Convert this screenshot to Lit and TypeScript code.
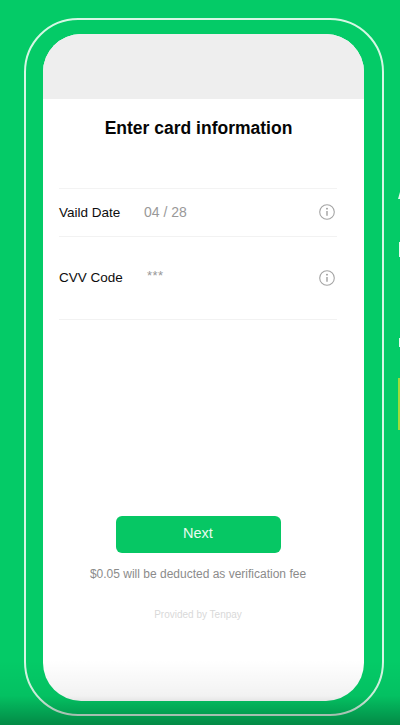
import { LitElement, html, css, svg } from "lit";
import { customElement } from "lit/decorators.js";

const info = svg`<svg class="info" viewBox="0 0 16 16" width="16" height="16" fill="none">
  <circle cx="8" cy="8" r="7.3" stroke="#a4a4a4" stroke-width="1.1"/>
  <circle cx="8" cy="4.7" r="0.85" fill="#909090"/>
  <path d="M8 6.9V11.8" stroke="#909090" stroke-width="1.2"/>
</svg>`;

@customElement("app-root")
export class AppRoot extends LitElement {
  static styles = css`
    :host {
      display: block;
      position: relative;
      width: 400px;
      height: 725px;
      overflow: hidden;
      background: #04cb67;
      font-family: "Liberation Sans", Arial, sans-serif;
    }
    .frame {
      box-sizing: border-box;
      position: absolute;
      left: 24px;
      top: 18px;
      width: 360px;
      height: 698px;
      padding: 14px 18px 13px 17px;
      border: 2px solid #d6f7e4;
      border-radius: 54px;
    }
    .phone {
      box-sizing: border-box;
      height: 100%;
      display: flex;
      flex-direction: column;
      overflow: hidden;
      border-radius: 38px;
      background: #fff;
    }
    .status { height: 65px; flex: none; background: #eeeeee; }
    h1 {
      margin: 19px 10px 0 0;
      font-size: 17.5px;
      line-height: 21px;
      font-weight: 700;
      text-align: center;
      color: #050505;
    }
    .form {
      margin: 49px 27px 0 16px;
      border-top: 1px solid #f3f3f3;
    }
    .row {
      box-sizing: border-box;
      display: flex;
      align-items: center;
      border-bottom: 1px solid #f2f2f2;
      font-size: 13.5px;
      color: #0d0d0d;
    }
    .row.date { height: 48px; padding-bottom: 1px; }
    .row.cvv { height: 83px; align-items: flex-start; }
    .row.cvv > * { margin-top: 33px; }
    .label { width: 85px; }
    .value { flex: 1; color: #999999; font-size: 14px; }
    .stars { font-size: 13px; padding-left: 3px; margin-top: 31px !important; letter-spacing: 0.5px; }
    .info { flex: none; margin-right: 2px; }
    .row.cvv .info { margin-top: 33px; }
    .actions {
      margin-top: auto;
      margin-right: 11px;
      padding-bottom: 80px;
      display: flex;
      flex-direction: column;
      align-items: center;
    }
    button {
      width: 165px;
      height: 37px;
      border: 0;
      border-radius: 6px;
      background: #06c764;
      color: #e9fbf1;
      font: 14.5px "Liberation Sans", Arial, sans-serif;
      padding: 0 0 3px;
    }
    .fee { margin-top: 14px; font-size: 12px; line-height: 14px; color: #8b8b8b; }
    .by { margin-top: 28px; font-size: 10px; line-height: 12px; color: #d9d9d9; }
    .shade {
      position: absolute;
      left: 0;
      right: 0;
      bottom: 0;
      height: 65px;
      pointer-events: none;
      background: linear-gradient(rgba(0,0,0,0), rgba(0,0,0,0.05) 55%, rgba(0,0,0,0.32));
    }
    .edge { position: absolute; background: #e6fbef; }
    .a { left: 398px; top: 192px; width: 2px; height: 7px; clip-path: polygon(100% 0, 100% 100%, 0 100%); }
    .c { left: 399px; top: 242px; width: 1px; height: 15px; }
    .d { left: 399px; top: 338px; width: 1px; height: 9px; }
    .y { left: 398px; top: 378px; width: 2px; height: 52px; background: #9fdc3a; }
  `;

  render() {
    return html`
      <div class="frame">
        <div class="phone">
          <div class="status"></div>
          <h1>Enter card information</h1>
          <div class="form">
            <div class="row date">
              <span class="label">Vaild Date</span>
              <span class="value">04 / 28</span>
              ${info}
            </div>
            <div class="row cvv">
              <span class="label">CVV Code</span>
              <span class="value stars">***</span>
              ${info}
            </div>
          </div>
          <div class="actions">
            <button>Next</button>
            <div class="fee">$0.05 will be deducted as verification fee</div>
            <div class="by">Provided by Tenpay</div>
          </div>
        </div>
      </div>
      <div class="shade"></div>
      <div class="edge a"></div>
      <div class="edge c"></div>
      <div class="edge d"></div>
      <div class="edge y"></div>
    `;
  }
}
